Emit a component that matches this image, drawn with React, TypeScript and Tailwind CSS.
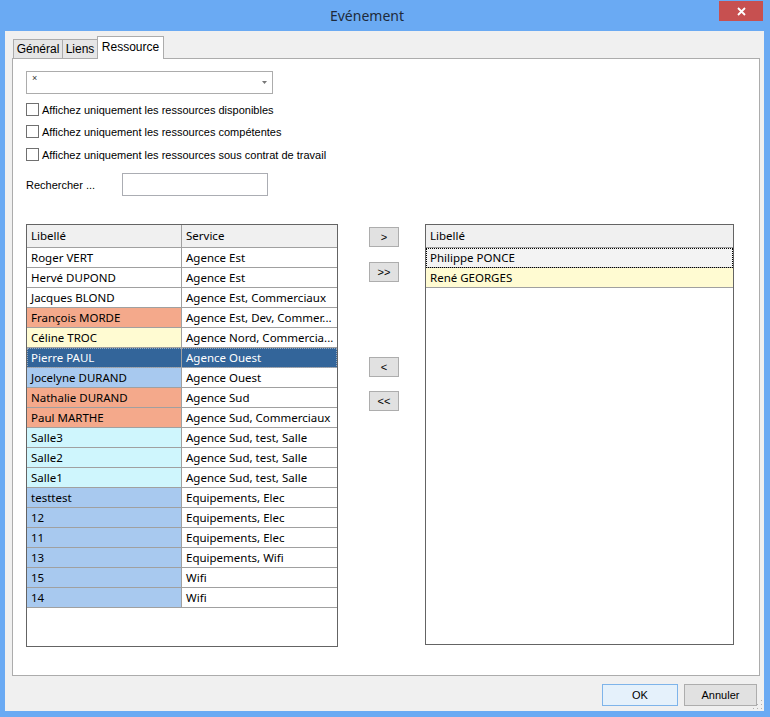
import React from "react";

type Row = { name: string; service: string; bg?: string; selected?: boolean };

const rows: Row[] = [
  { name: "Roger VERT", service: "Agence Est" },
  { name: "Hervé DUPOND", service: "Agence Est" },
  { name: "Jacques BLOND", service: "Agence Est, Commerciaux" },
  { name: "François MORDE", service: "Agence Est, Dev, Commer...", bg: "bg-[#f4a98b]" },
  { name: "Céline TROC", service: "Agence Nord, Commercia...", bg: "bg-[#fffbd2]" },
  { name: "Pierre PAUL", service: "Agence Ouest", selected: true },
  { name: "Jocelyne DURAND", service: "Agence Ouest", bg: "bg-[#a8c9ef]" },
  { name: "Nathalie DURAND", service: "Agence Sud", bg: "bg-[#f4a98b]" },
  { name: "Paul MARTHE", service: "Agence Sud, Commerciaux", bg: "bg-[#f4a98b]" },
  { name: "Salle3", service: "Agence Sud, test, Salle", bg: "bg-[#cff6fd]" },
  { name: "Salle2", service: "Agence Sud, test, Salle", bg: "bg-[#cff6fd]" },
  { name: "Salle1", service: "Agence Sud, test, Salle", bg: "bg-[#cff6fd]" },
  { name: "testtest", service: "Equipements, Elec", bg: "bg-[#a8c9ef]" },
  { name: "12", service: "Equipements, Elec", bg: "bg-[#a8c9ef]" },
  { name: "11", service: "Equipements, Elec", bg: "bg-[#a8c9ef]" },
  { name: "13", service: "Equipements, Wifi", bg: "bg-[#a8c9ef]" },
  { name: "15", service: "Wifi", bg: "bg-[#a8c9ef]" },
  { name: "14", service: "Wifi", bg: "bg-[#a8c9ef]" },
];

const cell = "overflow-hidden whitespace-nowrap pl-[4px]";

function Check({ label }: { label: string }) {
  return (
    <div className="flex items-center">
      <span className="h-[13px] w-[13px] border border-[#707070] bg-white" />
      <span className="ml-[3px] mt-[2px] text-[11px] leading-[13px] text-black">{label}</span>
    </div>
  );
}

function MoveButton({ label, className }: { label: string; className: string }) {
  return (
    <button
      className={`flex h-[20px] w-[30px] items-center justify-center border border-[#adadad] bg-[#e1e1e1] text-[11px] leading-none text-black ${className}`}
    >
      {label}
    </button>
  );
}

export default function App() {
  return (
    <div className="relative flex h-[717px] w-[770px] flex-col overflow-hidden bg-[#6aaaf3] font-['Liberation_Sans',Arial,sans-serif]">
      {/* title bar */}
      <div className="relative flex h-[31px] items-center justify-center pr-[36px]">
        <span className="font-['Noto_Sans',sans-serif] text-[14px] text-[#1e2a3a]">Evénement</span>
        <div className="absolute right-[7px] top-[1px] flex h-[20px] w-[44px] items-center justify-center bg-[#c75050]">
          <svg width="9" height="9" viewBox="0 0 9 9">
            <path d="M1 1 L8 8 M8 1 L1 8" stroke="white" strokeWidth="1.8" />
          </svg>
        </div>
      </div>

      {/* body */}
      <div className="relative mb-[6px] ml-[5px] mr-[6px] flex flex-1 flex-col bg-[#f0f0f0]">
        {/* tabs */}
        <div className="flex h-[27px] items-end pl-[8px] text-[12px] text-black">
          <div className="flex h-[19px] w-[50px] items-center justify-center border border-b-0 border-[#acacac] bg-[#e6e6e6]">
            Général
          </div>
          <div className="-ml-px flex h-[19px] w-[36px] items-center justify-center border border-b-0 border-[#acacac] bg-[#e6e6e6]">
            Liens
          </div>
          <div className="relative z-10 -mb-px -ml-px flex h-[23px] w-[67px] items-center justify-center border border-b-0 border-[#acacac] bg-white pb-[2px]">
            Ressource
          </div>
        </div>

        {/* panel */}
        <div className="ml-[7px] mr-[4px] flex h-[618px] flex-col border border-[#acacac] bg-white pl-[13px]">
          <div className="relative mt-[12px] flex h-[23px] w-[247px] items-start border border-[#acacac] bg-white pl-[5px]">
            <span className="mt-[2px] text-[9px] leading-none text-[#333]">×</span>
            <svg className="absolute right-[5px] top-[9px]" width="5" height="3" viewBox="0 0 5 3">
              <path d="M0 0 H5 L2.5 3 Z" fill="#777" />
            </svg>
          </div>

          <div className="mt-[8px]">
            <Check label="Affichez uniquement les ressources disponibles" />
          </div>
          <div className="mt-[7px]">
            <Check label="Affichez uniquement les ressources compétentes" />
          </div>
          <div className="mt-[8px]">
            <Check label="Affichez uniquement les ressources sous contrat de travail" />
          </div>

          <div className="mt-[11px] flex h-[23px] items-center">
            <span className="mt-[1px] w-[96px] text-[11px] text-black">Rechercher ...</span>
            <div className="h-[23px] w-[146px] border border-[#abadb3] bg-white" />
          </div>

          <div className="mt-[28px] flex items-start font-['Noto_Sans',sans-serif] text-[11.5px] text-black">
            {/* left grid */}
            <div className="h-[423px] w-[312px] border border-[#646464] bg-white">
              <div className="flex h-[23px] border-b border-[#a0a0a0] bg-[#f0f0f0] leading-[22px]">
                <div className={`${cell} w-[155px] border-r border-[#a0a0a0]`}>Libellé</div>
                <div className={`${cell} flex-1`}>Service</div>
              </div>
              {rows.map((r) => (
                <div
                  key={r.name}
                  className={`flex h-[20px] border-b border-[#a0a0a0] leading-[19px] ${
                    r.selected ? "bg-[#33659a] text-white outline-1 -outline-offset-1 outline-dotted outline-[#9aa9bd]" : ""
                  }`}
                >
                  <div className={`${cell} w-[155px] border-r border-[#a0a0a0] ${r.selected ? "" : r.bg ?? ""}`}>
                    {r.name}
                  </div>
                  <div className={`${cell} flex-1`}>{r.service}</div>
                </div>
              ))}
            </div>

            {/* move buttons */}
            <div className="ml-[31px] flex flex-col font-['Liberation_Sans',Arial,sans-serif]">
              <MoveButton label=">" className="mt-[3px]" />
              <MoveButton label=">>" className="mt-[15px]" />
              <MoveButton label="<" className="mt-[75px]" />
              <MoveButton label="<<" className="mt-[14px]" />
            </div>

            {/* right grid */}
            <div className="ml-[26px] flex h-[421px] w-[309px] flex-col border border-[#646464] bg-white">
              <div className={`${cell} h-[23px] border-b border-[#a0a0a0] bg-[#f0f0f0] leading-[22px]`}>Libellé</div>
              <div
                className={`${cell} h-[20px] border-b border-[#a0a0a0] bg-[#f3f3f3] leading-[19px] outline-1 -outline-offset-1 outline-dotted outline-black`}
              >
                Philippe PONCE
              </div>
              <div className={`${cell} h-[20px] border-b border-[#a0a0a0] bg-[#fffbd2] leading-[19px]`}>René GEORGES</div>
            </div>
          </div>
        </div>

        {/* footer buttons */}
        <div className="mt-[8px] flex justify-end gap-[6px] pr-[7px] text-[11px] text-black">
          <button className="h-[22px] w-[76px] border border-[#7eb4ea] bg-[#e5f1fb]">OK</button>
          <button className="h-[22px] w-[73px] border border-[#adadad] bg-[#e1e1e1]">Annuler</button>
        </div>

        <svg className="absolute bottom-[1px] right-[1px]" width="11" height="11" viewBox="0 0 11 11">
          <rect x="9" y="1" width="1" height="1" fill="#b0b0b0" />
          <rect x="9" y="5" width="1" height="1" fill="#b0b0b0" />
          <rect x="5" y="5" width="1" height="1" fill="#b0b0b0" />
          <rect x="9" y="9" width="1" height="1" fill="#b0b0b0" />
          <rect x="5" y="9" width="1" height="1" fill="#b0b0b0" />
          <rect x="1" y="9" width="1" height="1" fill="#b0b0b0" />
        </svg>
      </div>
    </div>
  );
}
